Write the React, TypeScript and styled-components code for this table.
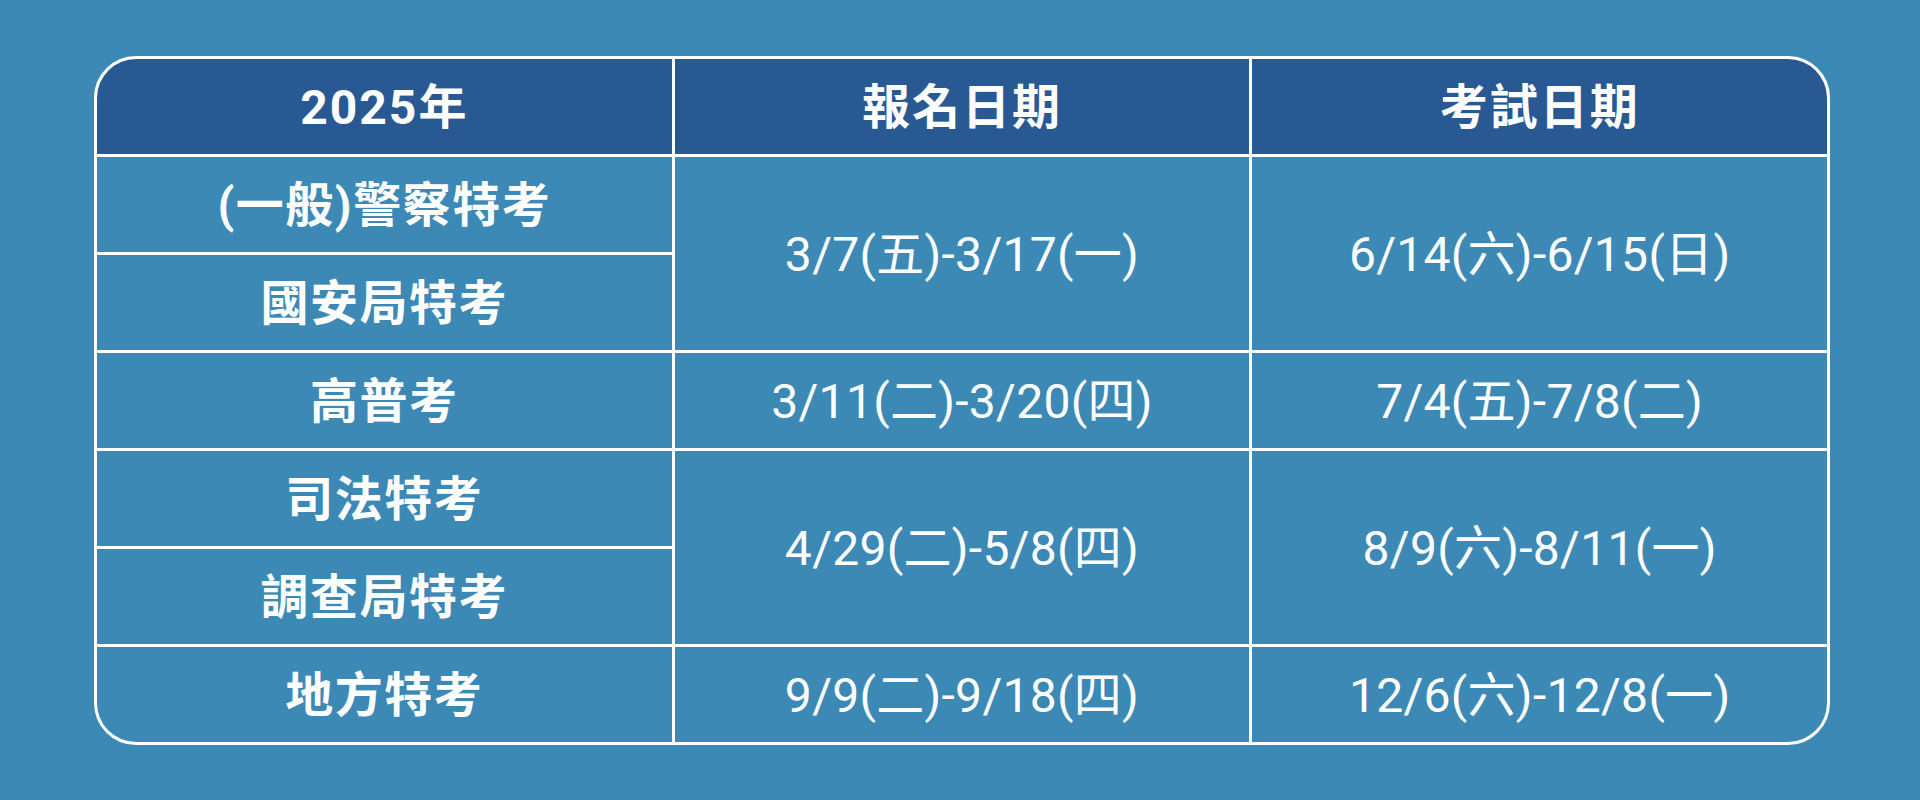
import React from 'react';
import styled, {createGlobalStyle} from "styled-components";

interface IRow {
    label: string,
    signup?: string,
    exam?: string,
    span?: number,
}

const rows: IRow[] = [
    {label: '(一般)警察特考', signup: '3/7(五)-3/17(一)', exam: '6/14(六)-6/15(日)', span: 2},
    {label: '國安局特考'},
    {label: '高普考', signup: '3/11(二)-3/20(四)', exam: '7/4(五)-7/8(二)', span: 1},
    {label: '司法特考', signup: '4/29(二)-5/8(四)', exam: '8/9(六)-8/11(一)', span: 2},
    {label: '調查局特考'},
    {label: '地方特考', signup: '9/9(二)-9/18(四)', exam: '12/6(六)-12/8(一)', span: 1},
]

const GlobalStyle = createGlobalStyle`
  html, body {
    margin: 0;
    padding: 0;
    background: #3c89b6;
  }
`

const Page = styled.div`
  width: 1920px;
  height: 800px;
  box-sizing: border-box;
  padding-left: 94px;
  display: flex;
  align-items: center;
  background: #3c89b6;
  font-family: Roboto, "Noto Sans CJK TC", sans-serif;
  color: #fff;
`

const Table = styled.div`
  width: 1736px;
  box-sizing: border-box;
  display: grid;
  grid-template-columns: repeat(3, 1fr);
  grid-template-rows: repeat(7, 95px);
  gap: 3px;
  background: #fff;
  border: 3px solid #fff;
  border-radius: 42px;
  overflow: hidden;
`

const Cell = styled.div<{ $span?: number, $head?: boolean }>`
  display: flex;
  justify-content: center;
  align-items: center;
  background: ${props => props.$head ? '#285992' : '#3c89b6'};
  grid-row: span ${props => props.$span || 1};
  font-size: 48px;
  font-weight: ${props => props.$head ? 700 : 400};
  letter-spacing: ${props => props.$head ? '2px' : '0.3px'};
  line-height: 1;
  padding-top: 4px;
  box-sizing: border-box;
`

const Label = styled(Cell)`
  font-weight: 700;
  letter-spacing: 1.5px;
`

const App = () => {
    return (
        <>
            <GlobalStyle/>
            <Page>
                <Table>
                    <Cell $head>2025年</Cell>
                    <Cell $head>報名日期</Cell>
                    <Cell $head>考試日期</Cell>
                    {
                        rows.map(row => (
                            <React.Fragment key={row.label}>
                                <Label>{row.label}</Label>
                                {row.signup && <Cell $span={row.span}>{row.signup}</Cell>}
                                {row.exam && <Cell $span={row.span}>{row.exam}</Cell>}
                            </React.Fragment>
                        ))
                    }
                </Table>
            </Page>
        </>
    );
};

export default App;
